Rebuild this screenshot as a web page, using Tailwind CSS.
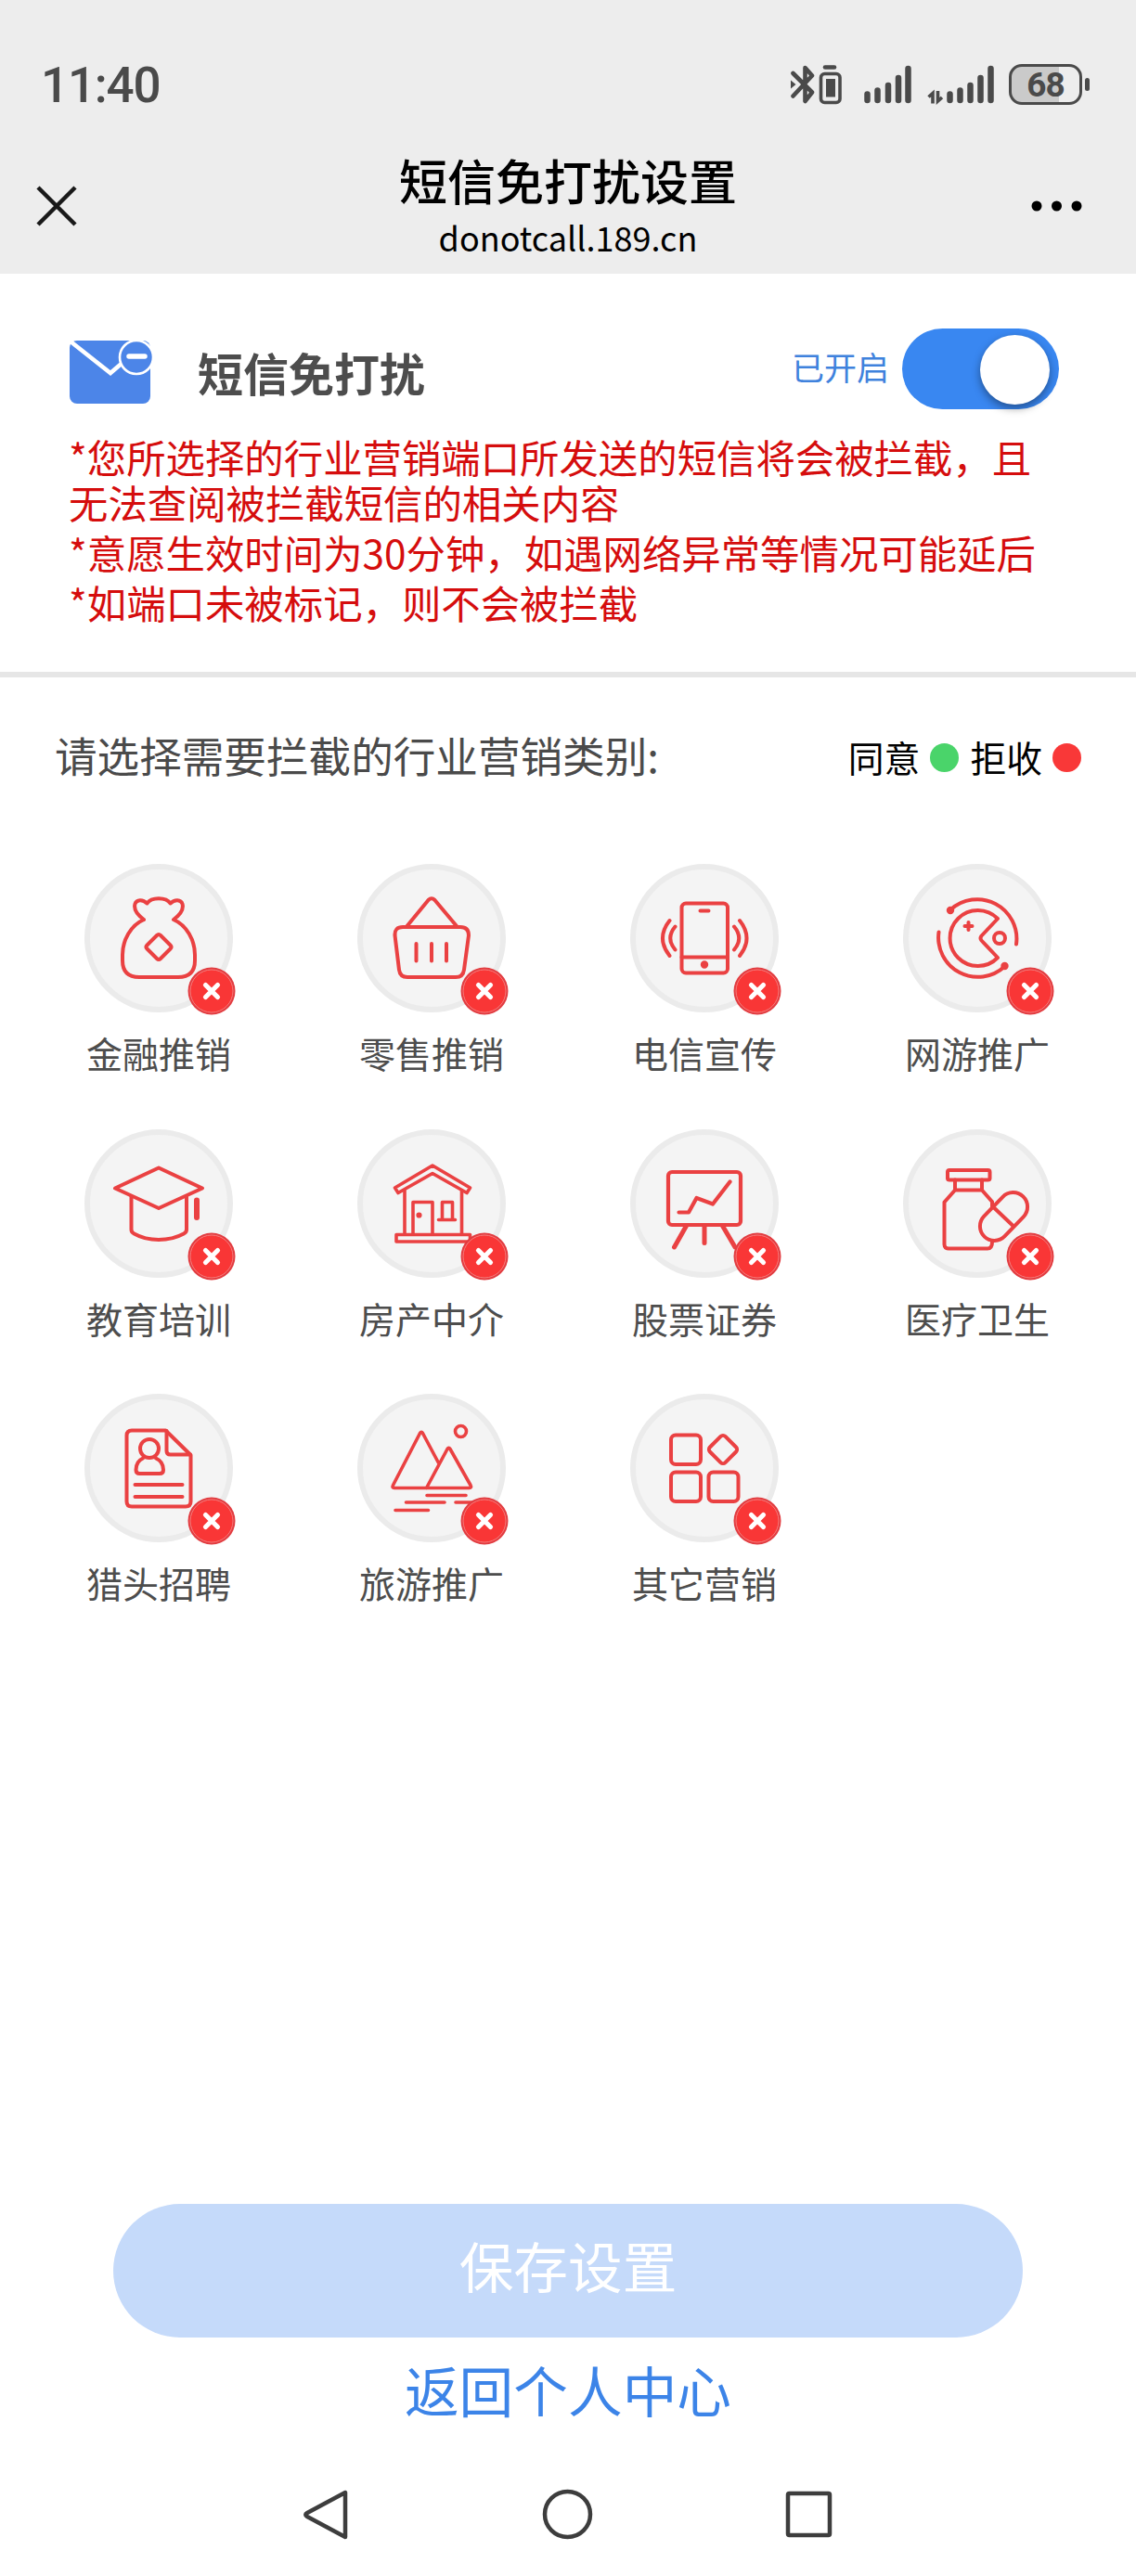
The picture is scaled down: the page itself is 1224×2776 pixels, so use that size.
<!DOCTYPE html>
<html lang="zh-CN">
<head>
    <meta charset="UTF-8">
    <meta name="viewport" content="width=device-width, initial-scale=1.0">
    <title>短信免打扰设置</title>
    <script src="https://cdn.jsdelivr.net/npm/@tailwindcss/browser@4"></script>
</head>
<body class="bg-white font-['Noto_Sans_CJK_SC',sans-serif]">

    <!-- Shared badge -->
    <svg class="hidden">
        <symbol id="reject" viewBox="0 0 52 52">
            <circle cx="26" cy="26" r="25.5" fill="#e23c40"/>
            <circle cx="26" cy="26" r="23" fill="#f93636" stroke="#f77c7c" stroke-width="1"/>
            <path d="M19.500 19.500l13 13M32.500 19.500l-13 13" stroke="#fff" stroke-width="5.2" stroke-linecap="round"/>
        </symbol>
    </svg>

    <div class="flex h-[2776px] w-[1224px] flex-col overflow-hidden">

        <!-- Header -->
        <header class="h-[295px] shrink-0 bg-[#ededed]">
            <div class="flex h-[150px] items-start justify-between pt-[62px] pl-[44px] pr-[50px]">
                <div class="font-['Roboto',sans-serif] text-[53px] font-medium leading-[60px] tracking-[-1.2px] text-[#4a4a4a]">11:40</div>
                <div class="flex items-center pt-[6px] text-[#4a4a4a]">
                    <svg class="h-[46px] w-[56px]" viewBox="0 0 56 46" fill="none" stroke="currentColor" stroke-width="4.6" stroke-linecap="round" stroke-linejoin="round">
                        <path d="M2.5 11L23 31.5 15.5 41V5L23 13.5 2.5 35.500"/>
                        <path d="M0 18.500l5.500 4.500-5.500 4.500z" fill="currentColor" stroke="none"/>
                        <path d="M37 4.500h10"/>
                        <rect x="32.500" y="11.500" width="20.500" height="31" rx="4" stroke-width="3.600"/>
                        <path d="M38 17h10v19.500h-10z" fill="currentColor" stroke="none"/>
                    </svg>
                    <svg class="ml-[22px] h-[46px] w-[52px]" viewBox="0 0 52 46" stroke="currentColor" stroke-width="6.500" stroke-linecap="round">
                        <path d="M4.500 33.500v6.500M15.500 29.500v10.500M27 24v16M38 16v24M48.500 6v34"/>
                    </svg>
                    <svg class="ml-[16px] h-[46px] w-[74px]" viewBox="0 0 74 46" stroke="currentColor" stroke-width="6.500" stroke-linecap="round" fill="none">
                        <path d="M2.500 36.500l4.500-4v11M12.500 30v11l4.500-4" stroke-width="3.600" stroke-linecap="butt"/>
                        <path d="M25.500 33.500v6.500M36.500 29.500v10.500M47.500 24v16M58.500 16v24M69.500 6v34"/>
                    </svg>
                    <div class="ml-[15px] flex items-center">
                        <div class="h-[44px] w-[79px] rounded-[14px] border-[3.5px] border-[#4a4a4a] bg-linear-to-r from-[#cacaca] from-[70%] to-[#ededed] to-[70%] text-center font-['Roboto',sans-serif] text-[37px] font-bold leading-[39px] tracking-[-1px]">68</div>
                        <div class="ml-[3px] h-[14px] w-[5px] rounded-full bg-[#4a4a4a]"></div>
                    </div>
                </div>
            </div>
            <div class="flex items-start justify-between pl-[38px] pr-[58px]">
                <svg class="mt-[49px] h-[46px] w-[46px]" viewBox="0 0 46 46" stroke="#191919" stroke-width="4.500">
                    <path d="M3 3l40 40M43 3L3 43"/>
                </svg>
                <div class="flex flex-col items-center pl-[30px] text-black">
                    <h1 class="mt-[12px] text-[52px] font-medium leading-[64px]">短信免打扰设置</h1>
                    <div class="mt-[7px] text-[36px] leading-[44px]">donotcall.189.cn</div>
                </div>
                <svg class="mt-[61px] h-[22px] w-[56px]" viewBox="0 0 56 22">
                    <circle cx="7" cy="11" r="5.500"/>
                    <circle cx="28.500" cy="11" r="5.500"/>
                    <circle cx="50" cy="11" r="5.500"/>
                </svg>
            </div>
        </header>

        <!-- SMS switch -->
        <section class="h-[435px] shrink-0 border-b-[6px] border-[#e6e6e6] pl-[74px] pr-[83px] pt-[59px]">
            <div class="flex h-[87px] items-center">
                <svg class="mt-[6px] h-[68px] w-[92px]" viewBox="-1 0 92 68">
                    <rect width="87" height="68" rx="8" fill="#4c85e8"/>
                    <path d="M1 1L44 35l14-12" fill="none" stroke="#fff" stroke-width="4.500"/>
                    <circle cx="72" cy="18" r="18" fill="#4c85e8" stroke="#fff" stroke-width="2.600"/>
                    <path d="M64 17h17" stroke="#fff" stroke-width="5.500" stroke-linecap="round"/>
                </svg>
                <h2 class="ml-[47px] pt-[7px] text-[49px] font-bold leading-[60px] text-[#4d4d4d]">短信免打扰</h2>
                <span class="ml-auto pb-[5px] text-[35px] leading-[50px] text-[#3f82dd]">已开启</span>
                <div class="ml-[14px] flex h-[87px] w-[169px] items-center justify-end rounded-full bg-[#3987f1] pr-[10px]">
                    <div class="mt-[2px] h-[75px] w-[75px] rounded-full bg-white shadow-[0_4px_10px_rgba(0,0,0,0.4)]"></div>
                </div>
            </div>
            <div class="mt-[26px] w-[1066px] space-y-[5px] text-[42.4px] leading-[49px] text-[#d50d0d]">
                <p>*您所选择的行业营销端口所发送的短信将会被拦截，且<br>无法查阅被拦截短信的相关内容</p>
                <p>*意愿生效时间为30分钟，如遇网络异常等情况可能延后</p>
                <p>*如端口未被标记，则不会被拦截</p>
            </div>
        </section>

        <!-- Categories -->
        <main class="flex-1">
            <div class="flex items-center pl-[59px] pr-[59px] pt-[50px]">
                <h3 class="text-[45.6px] leading-[66px] text-[#4a4a4a]">请选择需要拦截的行业营销类别:</h3>
                <div class="ml-auto flex items-center pt-[3px] text-[38.8px] leading-[60px] text-black">
                    <span>同意</span>
                    <i class="mt-[3px] ml-[11px] mr-[12px] h-[31px] w-[31px] rounded-full bg-[#4ad46a]"></i>
                    <span>拒收</span>
                    <i class="mt-[3px] ml-[11px] h-[31px] w-[31px] rounded-full bg-[#f93838]"></i>
                </div>
            </div>

            <div class="ml-[24px] mt-[85px] grid w-[1176px] grid-cols-4 auto-rows-[285.500px] justify-items-center text-[39px] leading-[56px] text-[#4d4d4d]">
                <div class="flex flex-col items-center">
                    <div class="relative h-[160px] w-[160px] rounded-full border-[6px] border-[#ebebeb] bg-[#f4f4f4]">
                        <svg class="-m-[6px] h-[160px] w-[160px]" viewBox="0 0 160 160" fill="none" stroke="#ea4142" stroke-width="4" stroke-linecap="round" stroke-linejoin="round">
                            <path d="M64 60C56 54 53 48 54.500 43C56 38 63 38 67.500 42.500C72 35.500 88 35.500 92.500 42.500C97 38 104 38 105.500 43C107 48 104 54 96 60C110 66 119 82 119 98V104Q119 122 101 122H59Q41 122 41 104V98C41 82 50 66 64 60"/>
                            <path d="M78 77Q80 75 82 77L92.500 87.500Q94.500 89.500 92.500 91.500L82 102Q80 104 78 102L67.500 91.500Q65.500 89.500 67.500 87.500Z"/>
                        </svg>
                        <svg class="absolute left-[105px] top-[105px] h-[52px] w-[52px]"><use href="#reject"/></svg>
                    </div>
                    <span class="mt-[15px]">金融推销</span>
                </div>
                <div class="flex flex-col items-center">
                    <div class="relative h-[160px] w-[160px] rounded-full border-[6px] border-[#ebebeb] bg-[#f4f4f4]">
                        <svg class="-m-[6px] h-[160px] w-[160px]" viewBox="0 0 160 160" fill="none" stroke="#ea4142" stroke-width="4" stroke-linecap="round" stroke-linejoin="round">
                            <path d="M53.500 67L76.500 39Q80 35.500 83.500 39L107 67"/>
                            <path d="M49 68H111Q120 68 120 77L115 114Q114 122 106 122H54Q46 122 45 114L40.500 77Q40 68 49 68Z"/>
                            <path d="M63.500 86V104.500M80 86V104.500M96 86V104.500"/>
                        </svg>
                        <svg class="absolute left-[105px] top-[105px] h-[52px] w-[52px]"><use href="#reject"/></svg>
                    </div>
                    <span class="mt-[15px]">零售推销</span>
                </div>
                <div class="flex flex-col items-center">
                    <div class="relative h-[160px] w-[160px] rounded-full border-[6px] border-[#ebebeb] bg-[#f4f4f4]">
                        <svg class="-m-[6px] h-[160px] w-[160px]" viewBox="0 0 160 160" fill="none" stroke="#ea4142" stroke-width="4" stroke-linecap="round" stroke-linejoin="round">
                            <rect x="55.500" y="42.500" width="49.500" height="75" rx="4.500"/>
                            <path d="M55.500 100.500H105M75.500 50.500H84.500"/>
                            <circle cx="80" cy="108.500" r="2.200" fill="#ea4142"/>
                            <path d="M48.500 67.500Q38 80 48.500 92.500M42.500 61Q27.500 80 42.500 99M112 67.500Q122.500 80 112 92.500M118 61Q133 80 118 99"/>
                        </svg>
                        <svg class="absolute left-[105px] top-[105px] h-[52px] w-[52px]"><use href="#reject"/></svg>
                    </div>
                    <span class="mt-[15px]">电信宣传</span>
                </div>
                <div class="flex flex-col items-center">
                    <div class="relative h-[160px] w-[160px] rounded-full border-[6px] border-[#ebebeb] bg-[#f4f4f4]">
                        <svg class="-m-[6px] h-[160px] w-[160px]" viewBox="0 0 160 160" fill="none" stroke="#ea4142" stroke-width="4" stroke-linecap="round" stroke-linejoin="round">
                            <path d="M51 49.500A42.500 42.500 0 0 1 122 86.500M38.500 73.500A42.500 42.500 0 0 0 109.500 110.500"/>
                            <circle cx="51" cy="50" r="2.200" fill="#ea4142"/>
                            <circle cx="109.500" cy="110" r="2.200" fill="#ea4142"/>
                            <path d="M102 59A30 30 0 1 0 102 101L84.500 82.500Q82.500 80 84.500 77.500Z"/>
                            <circle cx="104" cy="80" r="6"/>
                            <path d="M70.500 63V71M66.500 67H74.500"/>
                        </svg>
                        <svg class="absolute left-[105px] top-[105px] h-[52px] w-[52px]"><use href="#reject"/></svg>
                    </div>
                    <span class="mt-[15px]">网游推广</span>
                </div>

                <div class="flex flex-col items-center">
                    <div class="relative h-[160px] w-[160px] rounded-full border-[6px] border-[#ebebeb] bg-[#f4f4f4]">
                        <svg class="-m-[6px] h-[160px] w-[160px]" viewBox="0 0 160 160" fill="none" stroke="#ea4142" stroke-width="4" stroke-linecap="round" stroke-linejoin="round">
                            <path d="M80 41.500L127 63.500L80 85L33 63.500Z"/>
                            <path d="M50.500 72.500V108Q50.500 111 53.500 112.500Q65 119 80 119Q95 119 107 112.500Q110 111 110 108V72.500"/>
                            <path d="M121 76.500V95" stroke-width="6"/>
                        </svg>
                        <svg class="absolute left-[105px] top-[105px] h-[52px] w-[52px]"><use href="#reject"/></svg>
                    </div>
                    <span class="mt-[15px]">教育培训</span>
                </div>
                <div class="flex flex-col items-center">
                    <div class="relative h-[160px] w-[160px] rounded-full border-[6px] border-[#ebebeb] bg-[#f4f4f4]">
                        <svg class="-m-[6px] h-[160px] w-[160px]" viewBox="0 0 160 160" fill="none" stroke="#ea4142" stroke-width="3.600" stroke-linecap="round" stroke-linejoin="round">
                            <path d="M81 39L40.500 63L44 68.500L81 47.500L118 68.500L121.500 63Z"/>
                            <path d="M51 66V113M112.500 66V113M42 113.500H121.500V121H42Z"/>
                            <path d="M60 113V78.500H81V113M91.500 97V78.500H102.500V97M87.500 97.500H105.500"/>
                            <circle cx="66.500" cy="92.500" r="1.300" fill="#ea4142"/>
                        </svg>
                        <svg class="absolute left-[105px] top-[105px] h-[52px] w-[52px]"><use href="#reject"/></svg>
                    </div>
                    <span class="mt-[15px]">房产中介</span>
                </div>
                <div class="flex flex-col items-center">
                    <div class="relative h-[160px] w-[160px] rounded-full border-[6px] border-[#ebebeb] bg-[#f4f4f4]">
                        <svg class="-m-[6px] h-[160px] w-[160px]" viewBox="0 0 160 160" fill="none" stroke="#ea4142" stroke-width="4.200" stroke-linecap="round" stroke-linejoin="round">
                            <rect x="41" y="46" width="78" height="57" rx="4"/>
                            <path d="M52.500 89.500H63L71.500 74L89 80.500L107.500 56.500"/>
                            <path d="M60.500 104L47.500 127M80 104V122.500M99.500 104L113 127" stroke-width="5"/>
                        </svg>
                        <svg class="absolute left-[105px] top-[105px] h-[52px] w-[52px]"><use href="#reject"/></svg>
                    </div>
                    <span class="mt-[15px]">股票证券</span>
                </div>
                <div class="flex flex-col items-center">
                    <div class="relative h-[160px] w-[160px] rounded-full border-[6px] border-[#ebebeb] bg-[#f4f4f4]">
                        <svg class="-m-[6px] h-[160px] w-[160px]" viewBox="0 0 160 160" fill="none" stroke="#ea4142" stroke-width="4" stroke-linecap="round" stroke-linejoin="round">
                            <rect x="48" y="44" width="45.500" height="10.500" rx="2"/>
                            <path d="M56 54.500V65.500L44.500 78.500V124Q44.500 128.500 49 128.500H91Q96 128.500 96 121.500M56 65.500H85M85 54.500V65.500L96 78V84"/>
                            <rect x="78.500" y="78.500" width="60" height="31" rx="15.500" transform="rotate(-46 108.500 94)"/>
                            <path d="M97.500 84L118 103.500"/>
                        </svg>
                        <svg class="absolute left-[105px] top-[105px] h-[52px] w-[52px]"><use href="#reject"/></svg>
                    </div>
                    <span class="mt-[15px]">医疗卫生</span>
                </div>

                <div class="flex flex-col items-center">
                    <div class="relative h-[160px] w-[160px] rounded-full border-[6px] border-[#ebebeb] bg-[#f4f4f4]">
                        <svg class="-m-[6px] h-[160px] w-[160px]" viewBox="0 0 160 160" fill="none" stroke="#ea4142" stroke-width="4" stroke-linecap="round" stroke-linejoin="round">
                            <path d="M51 39.500H87.500L114.500 66V116Q114.500 121.500 109 121.500H51Q45.500 121.500 45.500 116V45Q45.500 39.500 51 39.500Z"/>
                            <path d="M88.500 40V61.500Q88.500 65.500 92.500 65.500H114"/>
                            <circle cx="70" cy="59" r="10"/>
                            <path d="M63 69.500Q55.500 73 55.500 82Q55.500 86 59.500 86H81Q85 86 85 82Q85 73 77 69.500M54.500 98H105.500M54.500 111H105.500"/>
                        </svg>
                        <svg class="absolute left-[105px] top-[105px] h-[52px] w-[52px]"><use href="#reject"/></svg>
                    </div>
                    <span class="mt-[15px]">猎头招聘</span>
                </div>
                <div class="flex flex-col items-center">
                    <div class="relative h-[160px] w-[160px] rounded-full border-[6px] border-[#ebebeb] bg-[#f4f4f4]">
                        <svg class="-m-[6px] h-[160px] w-[160px]" viewBox="0 0 160 160" fill="none" stroke="#ea4142" stroke-width="3.600" stroke-linecap="round" stroke-linejoin="round">
                            <path d="M87.500 74.500L70.500 42.500Q69 40 67.500 42.500L38.500 98.500Q37 101.500 40 101.500H120.500Q123.500 101.500 122 98.500L100 59.500Q98.500 57 97 59.500L74.500 101.500"/>
                            <circle cx="111.500" cy="40.500" r="6"/>
                            <path d="M75 109.500H117M52.500 117H94M106 117H124M41 125.500H76.500"/>
                        </svg>
                        <svg class="absolute left-[105px] top-[105px] h-[52px] w-[52px]"><use href="#reject"/></svg>
                    </div>
                    <span class="mt-[15px]">旅游推广</span>
                </div>
                <div class="flex flex-col items-center">
                    <div class="relative h-[160px] w-[160px] rounded-full border-[6px] border-[#ebebeb] bg-[#f4f4f4]">
                        <svg class="-m-[6px] h-[160px] w-[160px]" viewBox="0 0 160 160" fill="none" stroke="#ea4142" stroke-width="4">
                            <rect x="44" y="44.500" width="32" height="31.500" rx="5"/>
                            <rect x="44" y="84.500" width="32" height="31.500" rx="5"/>
                            <rect x="84.500" y="84.500" width="32" height="31.500" rx="5"/>
                            <rect x="88.300" y="48.300" width="23.400" height="23.400" rx="3.500" transform="rotate(45 100 60)"/>
                        </svg>
                        <svg class="absolute left-[105px] top-[105px] h-[52px] w-[52px]"><use href="#reject"/></svg>
                    </div>
                    <span class="mt-[15px]">其它营销</span>
                </div>
            </div>
        </main>

        <!-- Actions -->
        <div class="flex h-[257px] shrink-0 flex-col items-center text-[58.7px]">
            <button class="h-[144px] w-[980px] shrink-0 rounded-full bg-[#c5dafa] pb-[12px] leading-[132px] text-white">保存设置</button>
            <a href="#" class="mt-[14px] leading-[84px] text-[#3c84e8]">返回个人中心</a>
        </div>

        <!-- System navigation -->
        <nav class="flex h-[144px] shrink-0 items-start justify-center pt-[49px]">
            <svg class="h-[58px] w-[574px]" viewBox="0 0 574 58" fill="none" stroke="#3d3d3d" stroke-width="4.500" stroke-linejoin="round">
                <path d="M47 5V53L6 31Q2.500 29 6 27Z"/>
                <circle cx="286.500" cy="28.500" r="24.500"/>
                <rect x="524" y="6" width="45" height="45" rx="1.500"/>
            </svg>
        </nav>
    </div>

</body>
</html>
